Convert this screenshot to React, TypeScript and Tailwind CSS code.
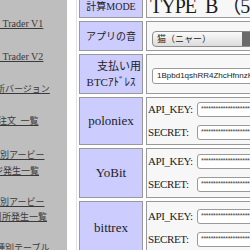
import React from 'react';

const sideLines = [
  { text: '\u00a0Trader V1', cls: 'mt-[16px] h-[16px] leading-[16px] text-[10px]' },
  { text: '\u00a0Trader V2', cls: 'mt-[17px] h-[16px] leading-[16px] text-[10px]' },
  { text: '新バージョン', cls: 'mt-[16px] h-[16px] leading-[16px] text-[9px] -ml-[4px]' },
  { text: '注文\u2002一覧', cls: 'mt-[16px] h-[16px] leading-[16px] text-[9px] -ml-[2px]' },
  { text: '所別アービー', cls: 'mt-[18px] h-[16px] leading-[16px] text-[9px] -ml-[9px]' },
  { text: 'ジ発生一覧', cls: 'mt-0 h-[16px] leading-[16px] text-[9px] -ml-[6px]' },
  { text: '所別アービー', cls: 'mt-[16px] h-[15px] leading-[15px] text-[9px] -ml-[9px]' },
  { text: '引所発生一覧', cls: 'mt-0 h-[15px] leading-[15px] text-[9px] -ml-[7px]' },
  { text: '種別テーブル', cls: 'mt-[15px] h-[16px] leading-[16px] text-[9px] -ml-[4px]' },
];

const exchanges = [
  { name: 'poloniex', h: 'h-[48px]' },
  { name: 'YoBit', h: 'h-[50px]' },
  { name: 'bittrex', h: 'h-[54px]' },
];

const stars = '*'.repeat(48);

const KeyLine: React.FC<{ label: string }> = ({ label }) => (
  <div className="flex items-center h-[15px]">
    <span className="w-[49px] shrink-0 text-[11px] tracking-[-0.4px] text-[#222]">{label}</span>
    <div className="flex-1 h-[15px] rounded-[3px] border border-[#9a9a9a] bg-white overflow-hidden whitespace-nowrap pl-[3px] text-[7px] leading-[12px] tracking-[-0.3px] text-[#444] font-['Liberation_Sans',sans-serif]">
      {stars}
    </div>
  </div>
);

const App: React.FC = () => {
  return (
    <div className="flex w-[250px] h-[250px] overflow-hidden bg-white font-['Liberation_Serif','Noto_Sans_CJK_JP',serif]">
      {/* side menu */}
      <div className="w-[67px] shrink-0 bg-[#bebebe] overflow-hidden">
        {sideLines.map((l, i) => (
          <a key={i} className={`block whitespace-nowrap underline text-[#3a3a3a] ${l.cls}`}>
            {l.text}
          </a>
        ))}
      </div>

      {/* settings table */}
      <div className="w-[270px] shrink-0 ml-[9px] -mt-[6px] border-l border-[#e2e2e2] pl-[2px] flex flex-col gap-[3px]">
        <div className="flex gap-[3px] h-[24px] shrink-0">
          <div className="w-[64px] shrink-0 border border-[#999] bg-[#ccccff] flex items-center justify-center text-[10px] text-[#222]">
            計算MODE
          </div>
          <div className="flex-1 border border-[#999] bg-[#f7f7f7] flex items-center pl-[3px] text-[20px] leading-[22px] tracking-[-1px] text-[#1a1a1a] whitespace-nowrap">
            TYPE{'\u2002'}B （5分足）
          </div>
        </div>

        <div className="flex gap-[3px] h-[30px] shrink-0">
          <div className="w-[64px] shrink-0 border border-[#999] bg-[#ccccff] flex items-center justify-center text-[10px] text-[#222]">
            アプリの音
          </div>
          <div className="flex-1 border border-[#999] bg-[#f7f7f7] flex items-start pt-[9px] pl-[5px]">
            <div className="w-[115px] h-[16px] rounded-[4px] border border-[#8c8c8c] bg-linear-to-b from-[#fbfbfb] to-[#dcdcdc] flex overflow-hidden">
              <span className="flex-1 pl-[4px] text-[9px] leading-[14px] text-[#222] font-['Noto_Sans_CJK_JP',sans-serif]">猫（ニャー）</span>
              <span className="w-[24px] bg-[#6a6a6a]" />
            </div>
          </div>
        </div>

        <div className="flex gap-[3px] h-[40px] shrink-0">
          <div className="w-[64px] shrink-0 border border-[#999] bg-[#ccccff] flex flex-col items-center justify-center text-[11px] leading-[16px] text-[#222]">
            <span className="pl-[16px]">支払い用</span>
            <span>BTCｱﾄﾞﾚｽ</span>
          </div>
          <div className="flex-1 border border-[#999] bg-[#f7f7f7] flex items-center pl-[5px]">
            <div className="mt-[3px] w-[140px] h-[16px] rounded-[3px] border border-[#9a9a9a] bg-white overflow-hidden whitespace-nowrap pl-[4px] text-[8px] leading-[14px] text-[#222] font-['Liberation_Sans',sans-serif]">
              1Bpbd1qshRR4ZhcHfnnzKx7QmVd3Lp9
            </div>
          </div>
        </div>

        {exchanges.map((ex) => (
          <div key={ex.name} className={`flex gap-[3px] shrink-0 ${ex.h}`}>
            <div className="w-[64px] shrink-0 border border-[#999] bg-[#ccccff] flex items-center justify-center text-[13px] text-[#222]">
              {ex.name}
            </div>
            <div className="flex-1 border border-[#999] bg-[#f7f7f7] flex flex-col justify-center gap-[8px] pl-[1px]">
              <KeyLine label="API_KEY:" />
              <KeyLine label="SECRET:" />
            </div>
          </div>
        ))}
      </div>
    </div>
  );
};

export default App;
